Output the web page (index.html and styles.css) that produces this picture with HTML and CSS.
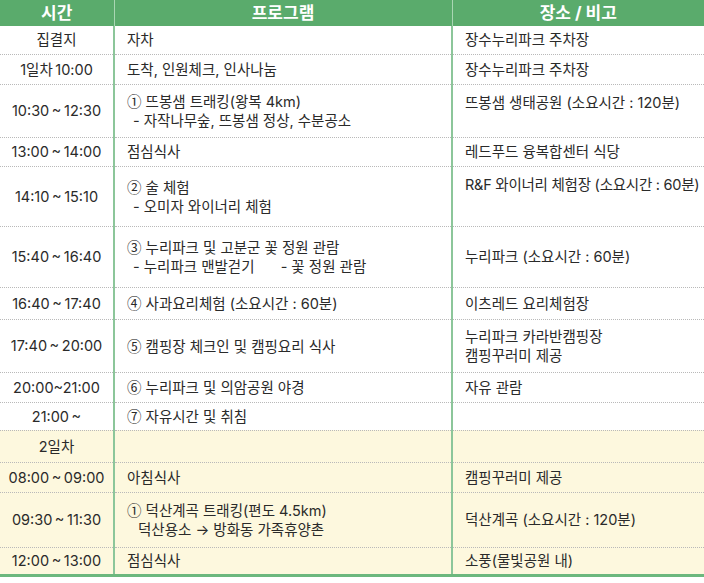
FILE: index.html
```html
<!DOCTYPE html>
<html lang="ko">
<head>
<meta charset="utf-8">
<link rel="stylesheet" href="styles.css">
</head>
<body>
<table class="sched">
  <colgroup><col class="c-time"><col class="c-prog"><col class="c-place"></colgroup>
  <thead>
    <tr class="head"><th>시간</th><th>프로그램</th><th>장소 / 비고</th></tr>
  </thead>
  <tbody>
    <tr class="h28"><td class="time">집결지</td><td>자차</td><td>장수누리파크 주차장</td></tr>
    <tr class="h30"><td class="time">1일차 10:00</td><td>도착, 인원체크, 인사나눔</td><td>장수누리파크 주차장</td></tr>
    <tr class="h53"><td class="time">10:30 ~ 12:30</td><td><span class="num">①</span> 뜨봉샘 트래킹(왕복 4km)<span class="sub">- 자작나무숲, 뜨봉샘 정상, 수분공소</span></td><td class="top">뜨봉샘 생태공원 (소요시간 : 120분)</td></tr>
    <tr class="h29"><td class="time">13:00 ~ 14:00</td><td>점심식사</td><td>레드푸드 융복합센터 식당</td></tr>
    <tr class="h60"><td class="time">14:10 ~ 15:10</td><td><span class="num">②</span> 술 체험<span class="sub">- 오미자 와이너리 체험</span></td><td class="top tight">R&amp;F 와이너리 체험장 (소요시간 : 60분)</td></tr>
    <tr class="h61"><td class="time">15:40 ~ 16:40</td><td><span class="num">③</span> 누리파크 및 고분군 꽃 정원 관람<span class="sub">- 누리파크 맨발걷기 <span class="gap"></span>- 꽃 정원 관람</span></td><td>누리파크 (소요시간 : 60분)</td></tr>
    <tr class="h32"><td class="time">16:40 ~ 17:40</td><td><span class="num">④</span> 사과요리체험 (소요시간 : 60분)</td><td>이츠레드 요리체험장</td></tr>
    <tr class="h53"><td class="time">17:40 ~ 20:00</td><td><span class="num">⑤</span> 캠핑장 체크인 및 캠핑요리 식사</td><td>누리파크 카라반캠핑장<br>캠핑꾸러미 제공</td></tr>
    <tr class="h30"><td class="time">20:00~21:00</td><td><span class="num">⑥</span> 누리파크 및 의암공원 야경</td><td>자유 관람</td></tr>
    <tr class="h28"><td class="time">21:00 ~</td><td><span class="num">⑦</span> 자유시간 및 취침</td><td></td></tr>
    <tr class="h32 day2"><td class="time">2일차</td><td></td><td></td></tr>
    <tr class="h30 day2"><td class="time">08:00 ~ 09:00</td><td>아침식사</td><td>캠핑꾸러미 제공</td></tr>
    <tr class="h55 day2"><td class="time">09:30 ~ 11:30</td><td><span class="num">①</span> 덕산계곡 트래킹(편도 4.5km)<span class="sub sub2">덕산용소 → 방화동 가족휴양촌</span></td><td>덕산계곡 (소요시간 : 120분)</td></tr>
    <tr class="h28 day2 last"><td class="time">12:00 ~ 13:00</td><td>점심식사</td><td>소풍(물빛공원 내)</td></tr>
  </tbody>
</table>
</body>
</html>
```

FILE: styles.css
```css
html, body {
  margin: 0;
  padding: 0;
  background: #ffffff;
}

body {
  font-family: Inter, "Noto Sans CJK KR", "Noto Sans", sans-serif;
  color: #2a2a2a;
  font-size: 14.5px;
  line-height: 19px;
}

.sched {
  width: 704px;
  border-collapse: collapse;
  table-layout: fixed;
}

.c-time { width: 114px; }
.c-prog { width: 338px; }
.c-place { width: 252px; }

.head th {
  height: 26px;
  padding: 0;
  background: #5aab6c;
  color: #ffffff;
  font-size: 17px;
  font-weight: 700;
  line-height: 22px;
  text-align: center;
  border-right: 1.5px solid #a9d6b3;
}

.head th:last-child { border-right: none; }

td {
  padding: 0 0 0 12px;
  vertical-align: middle;
  border-bottom: 1px dotted #b9b9b9;
  border-right: 2px solid #8cc69a;
  white-space: nowrap;
}

td:last-child { border-right: none; }

td.time {
  padding: 0;
  text-align: center;
  word-spacing: -1.5px;
}

td.top {
  vertical-align: top;
  padding-top: 8px;
}

.tight { letter-spacing: -0.25px; }

.num {
  font-family: "Noto Sans CJK KR", sans-serif;
}

.sub {
  display: block;
  padding-left: 6px;
}

.sub2 { padding-left: 11px; }

.gap {
  display: inline-block;
  width: 22px;
}

.day2 td { background: #fdf8de; }

.last td { border-bottom: 3px solid #6cb87e; }

.h28 { height: 28px; }
.h29 { height: 29px; }
.h30 { height: 30px; }
.h32 { height: 32px; }
.h53 { height: 53px; }
.h55 { height: 55px; }
.h60 { height: 60px; }
.h61 { height: 61px; }
```
